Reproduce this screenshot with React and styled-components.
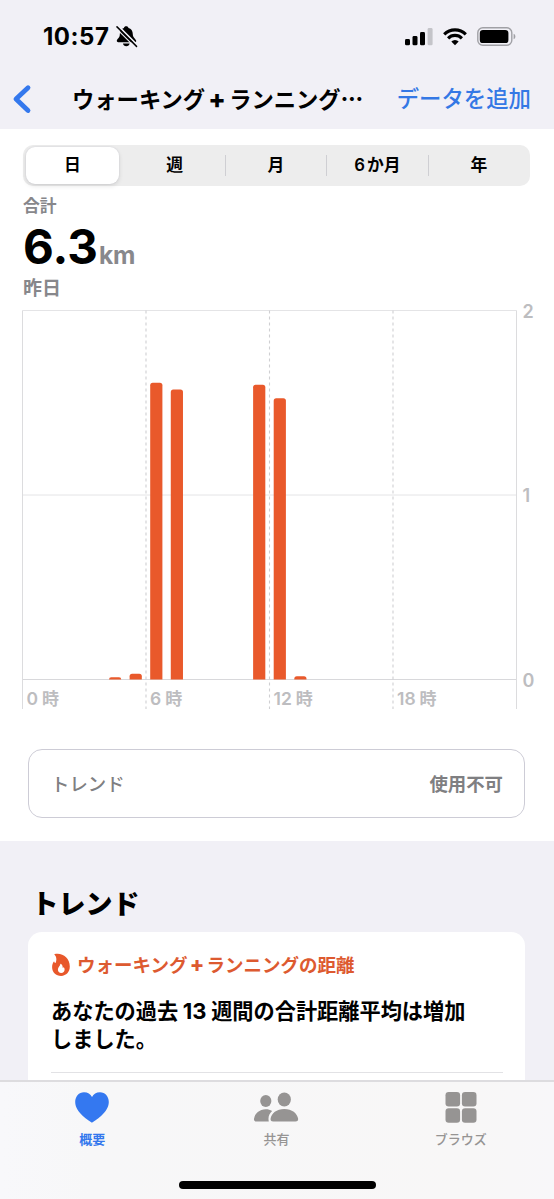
import React from 'react';
import styled, { createGlobalStyle } from 'styled-components';

const GlobalStyle = createGlobalStyle`
  * { box-sizing:border-box; }
  body {
    margin:0;
    background:#fff;
    font-family:Inter, 'Noto Sans CJK JP', sans-serif;
    color:#000;
  }
  svg { display:block; flex:none; }
`;

const Screen = styled.div`
  width:554px;
  height:1199px;
  display:flex;
  flex-direction:column;
  overflow:hidden;
`;

const Header = styled.header`
  height:129px;
  flex:none;
  background:#f1f0f6;
`;

const StatusBar = styled.div`
  height:74px;
  display:flex;
  align-items:center;
  padding:0 38px 0 43px;
`;

const Time = styled.span`
  width:73px;
  font-size:24px;
  font-weight:700;
  line-height:28px;
  letter-spacing:0.5px;
`;

const StatusIcons = styled.div`
  margin-left:auto;
  display:flex;
  align-items:center;
  gap:10px;
`;

const NavBar = styled.nav`
  height:49px;
  display:flex;
  align-items:center;
  padding:0 23px 0 12px;
`;

const NavTitle = styled.h1`
  margin:0 0 0 40px;
  font-size:22.3px;
  font-weight:700;
  line-height:30px;
  white-space:nowrap;
`;

const Plus = styled.span`
  display:inline-block;
  width:${p => p.$width}px;
  text-align:center;
  font-size:1.15em;
  font-weight:800;
  line-height:1;
`;

const Ellipsis = styled.span`
  font-family:'Noto Sans CJK JP', sans-serif;
  font-weight:900;
`;

const AddLink = styled.a`
  margin-left:auto;
  color:#3478e5;
  font-size:22.4px;
  font-weight:500;
  line-height:30px;
  white-space:nowrap;
`;

const Main = styled.main`
  height:712px;
  flex:none;
  padding-top:15.5px;
`;

const Segments = styled.div`
  display:flex;
  margin:0 24px 0 23px;
  height:41.5px;
  border-radius:10px;
  background:#ededed;
  padding:2px 0 2.5px;
`;

const Segment = styled.button`
  flex:1;
  display:flex;
  align-items:center;
  padding:0;
  border:0;
  background:none;
  font:inherit;
  font-size:16.8px;
  font-weight:${p => (p.$active ? 700 : 600)};
  color:#000;

  &::after {
    content:'';
    width:1px;
    height:21px;
    background:${p => (p.$divider ? '#cfcfd3' : 'transparent')};
  }
`;

const SegmentLabel = styled.span`
  flex:1;
  height:37px;
  line-height:37px;
  margin:${p => (p.$active ? '0 4px 0 2.5px' : '0')};
  border-radius:9px;
  background:${p => (p.$active ? '#fff' : 'none')};
  box-shadow:${p => (p.$active ? '0 2px 5px rgba(0,0,0,0.11), 0 0 2px rgba(60,60,110,0.12)' : 'none')};
`;

const Digit = styled.span`
  margin-right:2px;
`;

const Summary = styled.section`
  padding-left:23px;
  height:117px;
  display:flex;
  flex-direction:column;
`;

const SummaryLabel = styled.span`
  margin-top:8px;
  color:#87878b;
  font-size:16.8px;
  font-weight:700;
  line-height:24px;
`;

const Total = styled.div`
  display:flex;
  align-items:baseline;
  height:57px;
  line-height:57px;
  font-size:47.5px;
  font-weight:700;
`;

const Unit = styled.span`
  margin-left:1px;
  color:#88888c;
  font-size:24.5px;
  font-weight:700;
  letter-spacing:-0.2px;
`;

const DayLabel = styled.span`
  margin-top:1px;
  color:#87878b;
  font-size:19px;
  font-weight:700;
  line-height:26px;
`;

const Chart = styled.svg`
  overflow:visible;
`;

const ChartText = styled.text`
  fill:#bdbdc0;
  font-family:Inter, 'Noto Sans CJK JP', sans-serif;
  font-size:${p => p.$size}px;
  font-weight:600;
`;

const TrendBox = styled.div`
  margin:38px 29px 0 28px;
  height:69px;
  padding:0 21px 2px 22px;
  display:flex;
  justify-content:space-between;
  align-items:center;
  border:1.5px solid #cdccd6;
  border-radius:14px;
  color:#7f7f82;
  font-size:18.4px;
  font-weight:500;
`;

const TrendStatus = styled.span`
  font-weight:700;
`;

const Trends = styled.section`
  flex:1;
  min-height:0;
  background:#f1f0f6;
  padding:46px 29px 0 28px;
  overflow:hidden;
`;

const Heading = styled.h2`
  margin:0 0 9px 3.5px;
  font-size:27px;
  font-weight:900;
  line-height:36px;
`;

const Card = styled.article`
  height:170px;
  padding:18px 22px 0 23px;
  border-radius:14px;
  background:#fff;
`;

const CardLabel = styled.div`
  height:29px;
  display:flex;
  align-items:center;
  gap:6px;
  color:#dd5a30;
  font-size:18.5px;
  font-weight:700;
  line-height:28px;
  white-space:nowrap;
`;

const CardText = styled.p`
  margin:18px 0 0;
  padding-bottom:19px;
  border-bottom:1.5px solid #e2e2e5;
  font-size:21.2px;
  font-weight:700;
  line-height:28px;
  white-space:nowrap;
`;

const Num = styled.span`
  display:inline-block;
  width:33px;
  text-align:center;
  font-size:22px;
  line-height:1;
`;

const TabBar = styled.footer`
  height:119px;
  flex:none;
  display:flex;
  flex-direction:column;
  align-items:center;
  border-top:2px solid #dddcdf;
  background:linear-gradient(90deg, #f8f8fb 0, #f7f7f8 90px, #f8f7f7 470px, #f8f7f9 100%);
`;

const Tabs = styled.div`
  width:554px;
  height:101px;
  display:flex;
  padding-right:1px;
`;

const Tab = styled.button`
  flex:1;
  display:flex;
  flex-direction:column;
  align-items:center;
  gap:5px;
  padding:8px 0 0;
  border:0;
  background:none;
  color:${p => (p.$active ? '#3478ed' : '#969493')};
  font:inherit;
  font-size:13px;
  font-weight:${p => (p.$active ? 700 : 500)};
  line-height:20px;
`;

const HomeIndicator = styled.div`
  width:197px;
  height:7.5px;
  border-radius:4px;
  background:#000;
  flex:none;
  margin-left:1px;
  margin-top:-2px;
`;

const BellOff = () => (
  <svg width="22" height="22" viewBox="0 0 22 22">
    <path d="M2.200 16.200C1.400 16.200.7 15.600.8 14.800 1 12.800 3.800 12 3.800 8.500 3.800 4.800 5.500 2.700 7.900 2 8.100.8 9 .2 10.200.2S12.200.8 12.500 2c2.600.7 4.300 2.800 4.300 6.300 0 3.600 2.900 4.500 3.400 6.500.2.900-.4 1.400-1.200 1.400ZM7 17.600h6.600c-.3 1.700-1.500 2.700-3.300 2.700s-3-1-3.300-2.700Z" />
    <path d="M1.800-.4 21.600 19.400" stroke="#f1f0f6" strokeWidth="1.900" />
    <path d="M1 .9 20.500 20.400" stroke="#000" strokeWidth="1.500" strokeLinecap="round" />
    <path d="M-.1 2.100 19 21.200" stroke="#f1f0f6" strokeWidth="1.100" />
  </svg>
);

const Signal = () => (
  <svg width="28" height="18" viewBox="0 0 28 18">
    <rect x="0" y="11" width="5" height="6.3" rx="1.4" />
    <rect x="7.5" y="8" width="5" height="9.3" rx="1.4" />
    <rect x="15" y="4" width="5" height="13.3" rx="1.4" />
    <rect x="22.6" y="0" width="5" height="17.3" rx="1.4" fill="#c4c4c9" />
  </svg>
);

const Wifi = () => (
  <svg width="24" height="18" viewBox="0 0 24 18">
    <g fill="none" stroke="#000" strokeWidth="3.1">
      <path d="M1.2 6.3A15.3 15.3 0 0 1 22.8 6.3" />
      <path d="M5.1 10.3A9.7 9.7 0 0 1 18.9 10.3" />
    </g>
    <path d="M12 17.2 8.3 13.6A5.3 5.3 0 0 1 15.7 13.6Z" />
  </svg>
);

const Battery = () => (
  <svg width="39" height="20" viewBox="0 0 39 20">
    <rect x=".8" y=".8" width="34" height="17.4" rx="5" fill="none" stroke="#a0a0a5" strokeWidth="1.4" />
    <rect x="2.8" y="2.9" width="28.6" height="13.2" rx="3.2" />
    <path d="M36.6 6.8c2.4.9 2.4 4.6 0 5.5Z" fill="#a0a0a5" />
  </svg>
);

const BackIcon = () => (
  <svg width="20" height="30" viewBox="0 0 20 30">
    <path d="M16 3.700 4 15l12 11.500" fill="none" stroke="#3478ed" strokeWidth="4.800" strokeLinecap="round" strokeLinejoin="round" />
  </svg>
);

const Flame = () => (
  <svg width="20" height="24" viewBox="0 0 20 24">
    <path fillRule="evenodd" fill="#e8582b" d="M3.200 1.200C10.800-.8 18.800 4.300 18.800 13.600c0 5.500-3.500 9.300-8.700 9.300S1.100 19.300 1.100 14.300c0-2.600.6-4.500 2-6.100.2 1.100.8 1.700 1.400 1.900C5.900 6.800 5.700 3.600 3.200 1.200ZM9.400 10.600c.1 2.300-2.500 3.300-2.500 6 0 2.100 1.300 3.500 3.300 3.500s3.400-1.400 3.400-3.500c0-1-.3-1.900-.9-2.600-.2.600-.5.900-1 1 .2-1.900-.7-3.600-2.300-4.400Z" />
  </svg>
);

const HeartIcon = () => (
  <svg width="34" height="34" viewBox="0 0 34 34">
    <path fill="#3478f0" d="M17 32.700C14.500 31 .2 22.900.2 12.100.2 6.300 3.900 2.200 9 2.200c3.800 0 6.400 2 8 4.800 1.600-2.800 4.200-4.800 8-4.800 5.100 0 8.800 4.100 8.800 9.900C33.800 22.900 19.500 31 17 32.700Z" />
  </svg>
);

const PeopleIcon = () => (
  <svg width="46" height="34" viewBox="0 0 46 34" fill="#969493">
    <ellipse cx="12.800" cy="10.900" rx="5.600" ry="6" />
    <path d="M3.400 31.600C1.500 31.600.8 30.400 1 28.800 1.700 23.700 6.500 19.300 12.800 19.300c2.400 0 4.500.6 6.300 1.700-2.900 2.600-4.300 6.100-3.300 10.600Z" />
    <ellipse cx="31.300" cy="9.500" rx="6.600" ry="7" />
    <path d="M20.300 31.600c-2.200 0-3-1.200-2.700-3 .8-5.300 6-9.700 13.700-9.700s13 4.400 13.800 9.700c.3 1.800-.5 3-2.700 3Z" />
  </svg>
);

const GridIcon = () => (
  <svg width="34" height="34" viewBox="0 0 34 34" fill="#969493">
    <rect x="1.500" y="2" width="14.600" height="14.400" rx="3.200" />
    <rect x="17.900" y="2" width="14.600" height="14.400" rx="3.200" />
    <rect x="1.500" y="18.300" width="14.600" height="14.400" rx="3.200" />
    <rect x="17.900" y="18.300" width="14.600" height="14.400" rx="3.200" />
  </svg>
);

const periods = [
  { id: 'day', label: '日' },
  { id: 'week', label: '週' },
  { id: 'month', label: '月' },
  { id: 'half', label: <><Digit>6</Digit>か月</> },
  { id: 'year', label: '年' },
];

const tabs = [
  { label: '概要', Icon: HeartIcon },
  { label: '共有', Icon: PeopleIcon },
  { label: 'ブラウズ', Icon: GridIcon },
];

const distances = [
  { hour: 4, km: 0.012 },
  { hour: 5, km: 0.031 },
  { hour: 6, km: 1.608 },
  { hour: 7, km: 1.572 },
  { hour: 11, km: 1.598 },
  { hour: 12, km: 1.525 },
  { hour: 13, km: 0.018 },
];

const LEFT = 22.5;
const RIGHT = 516.5;
const TOP = 7.5;
const BASE = 376.5;
const hourWidth = (RIGHT - LEFT) / 24;
const perKm = (BASE - TOP) / 2;

// rounded on top, square on the base line
const barPath = ({ hour, km }) => {
  const x = LEFT + hour * hourWidth + 4.2;
  const h = km * perKm;
  const r = Math.min(2.5, h);
  return `M${x} ${BASE}v${r - h}q0 ${-r} ${r} ${-r}h${12.2 - 2 * r}q${r} 0 ${r} ${r}V${BASE}Z`;
};

function DistanceChart() {
  return (
    <Chart width="554" height="408" viewBox="0 0 554 408">
      {[0, 1, 2].map(km => (
        <React.Fragment key={km}>
          <path d={`M${LEFT} ${BASE - km * perKm}H${RIGHT}`} stroke={km ? '#e4e4e6' : '#d8d8db'} />
          <ChartText $size={18} x="522.5" y={BASE - km * perKm + 7}>{km}</ChartText>
        </React.Fragment>
      ))}
      <path d={`M${LEFT} ${TOP}V406M${RIGHT} ${TOP}V406`} stroke="#dcdcde" />
      {[0, 6, 12, 18].map(hour => {
        const x = LEFT + hour * hourWidth;
        return (
          <React.Fragment key={hour}>
            {hour > 0 && <path d={`M${x} ${TOP}V406`} stroke="#cfcfd2" strokeWidth="1.1" strokeDasharray="3 3" />}
            <ChartText $size={17.5} x={x + 4} y="401.5">
              {hour}<tspan dx="4" fontSize="17">時</tspan>
            </ChartText>
          </React.Fragment>
        );
      })}
      {distances.map(d => <path key={d.hour} d={barPath(d)} fill="#e9592b" />)}
    </Chart>
  );
}

export default function App() {
  return (
    <Screen>
      <GlobalStyle />
      <Header>
        <StatusBar>
          <Time>10:57</Time>
          <BellOff />
          <StatusIcons>
            <Signal />
            <Wifi />
            <Battery />
          </StatusIcons>
        </StatusBar>
        <NavBar>
          <BackIcon />
          <NavTitle>
            ウォーキング<Plus $width={24}>+</Plus>ランニング<Ellipsis>…</Ellipsis>
          </NavTitle>
          <AddLink>データを追加</AddLink>
        </NavBar>
      </Header>

      <Main>
        <Segments>
          {periods.map(({ id, label }, i) => (
            <Segment key={id} $active={i === 0} $divider={i > 0 && i < periods.length - 1}>
              <SegmentLabel $active={i === 0}>{label}</SegmentLabel>
            </Segment>
          ))}
        </Segments>
        <Summary>
          <SummaryLabel>合計</SummaryLabel>
          <Total>6.3<Unit>km</Unit></Total>
          <DayLabel>昨日</DayLabel>
        </Summary>
        <DistanceChart />
        <TrendBox>
          <span>トレンド</span>
          <TrendStatus>使用不可</TrendStatus>
        </TrendBox>
      </Main>

      <Trends>
        <Heading>トレンド</Heading>
        <Card>
          <CardLabel>
            <Flame />
            <span>ウォーキング<Plus $width={19}>+</Plus>ランニングの距離</span>
          </CardLabel>
          <CardText>
            あなたの過去<Num>13</Num>週間の合計距離平均は増加<br />しました。
          </CardText>
        </Card>
      </Trends>

      <TabBar>
        <Tabs>
          {tabs.map(({ label, Icon }, i) => (
            <Tab key={label} $active={i === 0}>
              <Icon />
              {label}
            </Tab>
          ))}
        </Tabs>
        <HomeIndicator />
      </TabBar>
    </Screen>
  );
}
